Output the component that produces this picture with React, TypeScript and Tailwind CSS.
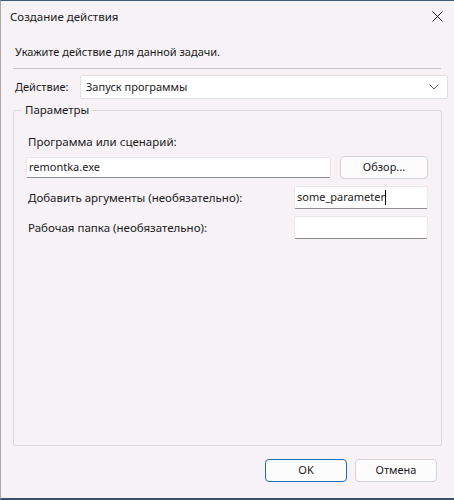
export default function App() {
  const font = { fontFamily: '"Noto Sans", "Liberation Sans", sans-serif' };
  return (
    <div
      style={font}
      className="w-[454px] h-[500px] bg-[#f6f2f5] text-[11px] text-[#1b1b1b] border-t border-t-[#3d5d78] border-l border-l-[#a9a9a9] border-b-2 border-b-[#35516b] flex flex-col"
    >
      {/* title bar */}
      <div className="h-[31px] flex items-center justify-between pl-[9px] pr-[10px]">
        <span className="text-[11.5px]">Создание действия</span>
        <svg width="11" height="11" viewBox="0 0 11 11" className="mr-[1px]">
          <path d="M0.5 0.5 L10.5 10.5 M10.5 0.5 L0.5 10.5" stroke="#1b1b1b" strokeWidth="1" />
        </svg>
      </div>

      <div className="mt-[12px] h-[16px] leading-[16px] pl-[14px]">Укажите действие для данной задачи.</div>
      <div className="mt-[8px] ml-[12px] w-[428px] h-px bg-[#c9c5c8]" />

      {/* action select */}
      <div className="mt-[6px] flex items-center h-[24px]">
        <span className="pl-[14px] w-[79px]">Действие:</span>
        <div className="flex-1 mr-[6px] h-[24px] bg-white border border-[#e3e0e2] rounded-[2px] flex items-center justify-between pl-[5px] pr-[8px]">
          <span>Запуск программы</span>
          <svg width="10" height="6" viewBox="0 0 10 6">
            <path d="M0.5 0.5 L5 5 L9.5 0.5" stroke="#5a5a5a" strokeWidth="1" fill="none" />
          </svg>
        </div>
      </div>

      {/* parameters group */}
      <fieldset className="mt-[3px] ml-[12px] w-[429px] h-[344px] border border-[#dcd8db] rounded-[2px] px-[12px] pb-0 m-0">
        <legend className="ml-[-4px] px-[3px] leading-[16px] text-[11.5px]">Параметры</legend>
        <div className="mt-[16px] h-[16px] leading-[16px] pl-[2px] text-[11.5px]">Программа или сценарий:</div>
        <div className="mt-[6px] flex items-center">
          <div className="w-[305px] h-[21px] bg-white border border-[#ebe8ea] border-b-[#8d8d8d] rounded-[2px] flex items-center pl-[2px]">
            remontka.exe
          </div>
          <button className="ml-[9px] w-[88px] h-[23px] bg-[#fdfcfd] border border-[#d6d3d5] rounded-[4px]">
            Обзор...
          </button>
        </div>
        <div className="mt-[7px] flex items-center justify-between">
          <span className="pl-[2px] text-[11.5px]">Добавить аргументы (необязательно):</span>
          <div className="w-[134px] h-[23px] bg-white border border-[#ebe8ea] border-b-[#8d8d8d] rounded-[2px] flex items-center pl-[2px] mr-[1px]">
            some_parameter
            <span className="inline-block w-px h-[15px] bg-black" />
          </div>
        </div>
        <div className="mt-[7px] flex items-center justify-between">
          <span className="pl-[2px] text-[11.5px]">Рабочая папка (необязательно):</span>
          <div className="w-[134px] h-[23px] bg-white border border-[#ebe8ea] border-b-[#8d8d8d] rounded-[2px] mr-[1px]" />
        </div>
      </fieldset>

      {/* buttons */}
      <div className="mt-[13px] flex justify-end gap-[8px] pr-[17px]">
        <button className="w-[82px] h-[23px] bg-[#fdfcfd] border border-[#1f6fb8] rounded-[4px]">OK</button>
        <button className="w-[82px] h-[23px] bg-[#fdfcfd] border border-[#d6d3d5] rounded-[4px]">Отмена</button>
      </div>
    </div>
  );
}
